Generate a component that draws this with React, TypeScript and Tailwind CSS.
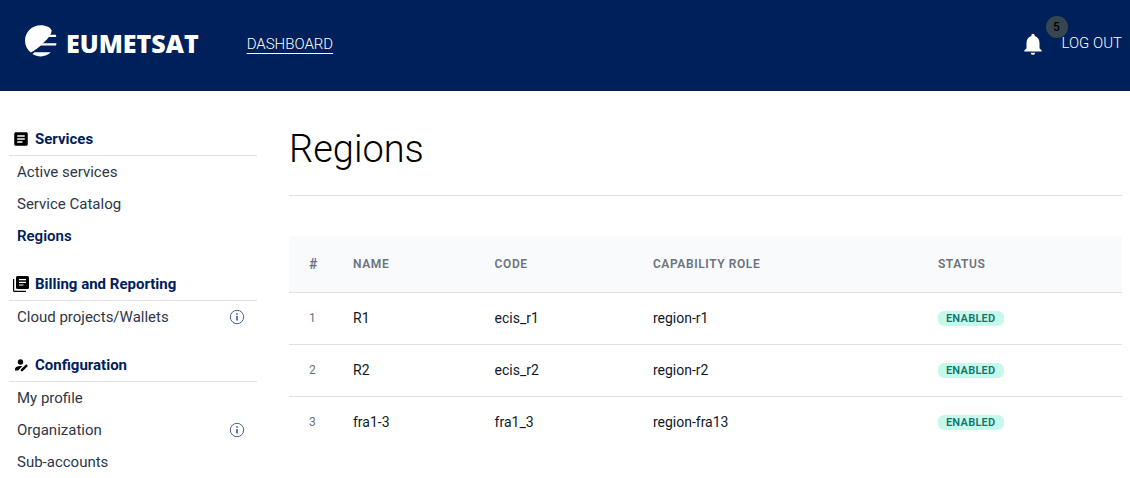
import React from "react";
import { MdArticle, MdNotifications } from "react-icons/md";

function Logo() {
  return (
    <a href="#home" aria-label="EUMETSAT" className="flex items-start gap-2 pb-1 text-white">
      <svg viewBox="0 0 34 32" className="h-8 w-[34px]" fill="currentColor" aria-hidden="true">
        <path d="M27.600 5.500C27 2.600 22 .2 16.800.2 8 .2 1 7 1 15.700c0 4.900 2.300 9 5.900 11.800C9.500 26 16.500 21.500 20 17.200 23.500 14 27.500 10 27.600 5.500Z" />
        <path d="M24.500 9.800h7.200l.6 2.100H23ZM19 18.200h13.500l-.5 2.400H16.300ZM10.500 27.300h16.300c-2.600 2.500-6.200 4.100-10 4.100-3 0-6-.9-8.300-2.400Z" />
      </svg>
      <span className="pt-0.5 font-['Open_Sans'] text-[25px] leading-8 font-extrabold">EUMETSAT</span>
    </a>
  );
}

function LibraryIcon() {
  return (
    <svg viewBox="0 0 18 18" className="size-[18px]" fill="currentColor" aria-hidden="true">
      <path
        fillRule="evenodd"
        d="M5.500 1h10A1.500 1.500 0 0 1 17 2.500v10a1.500 1.500 0 0 1-1.500 1.500h-10A1.500 1.500 0 0 1 4 12.500v-10A1.500 1.500 0 0 1 5.500 1ZM7 4v1.200h7V4Zm0 2.700v1.200h7V6.700Zm0 2.700v1.200h4.500V9.400Z"
      />
      <path d="M1 4h1.200v11.800H14V17H2.500A1.500 1.500 0 0 1 1 15.500Z" />
    </svg>
  );
}

function PersonEditIcon() {
  return (
    <svg viewBox="0 0 18 18" className="size-[18px]" fill="currentColor" aria-hidden="true">
      <circle cx="8.500" cy="6" r="2.700" />
      <path d="M3 14.500v-1.700C3 11 5.500 9.900 8.500 9.900c.7 0 1.300.1 1.900.2l-4.300 4.400Z" />
      <path d="M8.800 15.300v-1.700l5.400-5.300 1.700 1.700-5.300 5.300Z" />
    </svg>
  );
}

function InfoIcon() {
  return (
    <svg viewBox="0 0 16 16" className="size-4 text-[#4a6396]" fill="none" stroke="currentColor" aria-hidden="true">
      <circle cx="8" cy="8" r="6.700" />
      <path d="M8 7v4.500M8 4.200v1.600" strokeWidth="1.700" />
    </svg>
  );
}

type Item = { label: string; info?: boolean; active?: boolean };
type Section = { title: string; icon: React.ReactNode; items: Item[] };

const sections: Section[] = [
  {
    title: "Services",
    icon: <MdArticle className="size-[18px]" />,
    items: [{ label: "Active services" }, { label: "Service Catalog" }, { label: "Regions", active: true }],
  },
  {
    title: "Billing and Reporting",
    icon: <LibraryIcon />,
    items: [{ label: "Cloud projects/Wallets", info: true }],
  },
  {
    title: "Configuration",
    icon: <PersonEditIcon />,
    items: [{ label: "My profile" }, { label: "Organization", info: true }, { label: "Sub-accounts" }],
  },
];

const regions = [
  { name: "R1", code: "ecis_r1", role: "region-r1" },
  { name: "R2", code: "ecis_r2", role: "region-r2" },
  { name: "fra1-3", code: "fra1_3", role: "region-fra13" },
];

export default function App() {
  return (
    <div className="bg-white font-[Roboto,sans-serif] text-black">
      <header className="flex h-[91px] items-center bg-[#00205b] pr-2 pb-1 pl-6 text-white">
        <Logo />
        <nav className="ml-12">
          <a href="#dashboard" className="text-[15px] font-light underline underline-offset-4">DASHBOARD</a>
        </nav>
        <div className="ml-auto flex items-center gap-4">
          <button type="button" aria-label="Notifications" className="relative">
            <MdNotifications className="size-[26px]" />
            <span className="absolute -top-[15px] left-[26px] flex size-[22px] items-center justify-center rounded-full bg-[#37474f] text-xs font-medium text-black">5</span>
          </button>
          <a href="#logout" className="text-[15px] font-light">LOG OUT</a>
        </div>
      </header>

      <div className="flex gap-8 pr-2 pl-[9px]">
        <aside className="flex w-[248px] shrink-0 flex-col gap-4 pt-8">
          {sections.map((s) => (
            <section key={s.title}>
              <h2 className="flex h-[33px] items-center gap-[5px] border-b border-[#dee0e2] pl-[3px] text-[15px] font-bold">
                {s.icon}
                <span className="text-[#00205b]">{s.title}</span>
              </h2>
              <ul>
                {s.items.map((i) => (
                  <li key={i.label} className="flex h-8 items-center justify-between pr-3 pl-2">
                    <a
                      href="#section"
                      className={i.active ? "text-[15px] font-semibold text-[#00205b]" : "text-[15px] text-[#2d3748]"}
                    >
                      {i.label}
                    </a>
                    {i.info && <InfoIcon />}
                  </li>
                ))}
              </ul>
            </section>
          ))}
        </aside>

        <main className="min-w-0 flex-1 pt-8">
          <h1 className="border-b border-[#dee0e2] pt-0.5 pb-[22px] text-[38px] leading-[48px] font-light">Regions</h1>
          <table className="mt-10 w-full table-fixed text-left text-sm">
            <colgroup>
              <col className="w-[52px]" />
              <col className="w-[17%]" />
              <col className="w-[19%]" />
              <col className="w-[285px]" />
              <col />
            </colgroup>
            <thead>
              <tr className="h-14 border-b border-[#dee0e2] bg-[#f9fafb] text-xs tracking-wider text-[#6b7280]">
                <th className="pl-5 text-sm font-semibold">#</th>
                <th className="px-3 font-semibold">NAME</th>
                <th className="px-3 font-semibold">CODE</th>
                <th className="px-3 font-semibold">CAPABILITY ROLE</th>
                <th className="px-3 font-semibold">STATUS</th>
              </tr>
            </thead>
            <tbody className="text-[#111827]">
              {regions.map((r, n) => (
                <tr key={r.name} className="h-[52px] border-b border-[#dee0e2] last:border-b-0">
                  <td className="pl-5 text-xs text-[#6b7280]">{n + 1}</td>
                  <td className="px-3">{r.name}</td>
                  <td className="px-3">{r.code}</td>
                  <td className="px-3">{r.role}</td>
                  <td className="px-3">
                    <span className="flex w-fit rounded-md bg-[#c6f9ec] px-2 text-[11px] leading-[15px] font-semibold tracking-wide text-[#0f766e]">
                      ENABLED
                    </span>
                  </td>
                </tr>
              ))}
            </tbody>
          </table>
        </main>
      </div>
    </div>
  );
}
